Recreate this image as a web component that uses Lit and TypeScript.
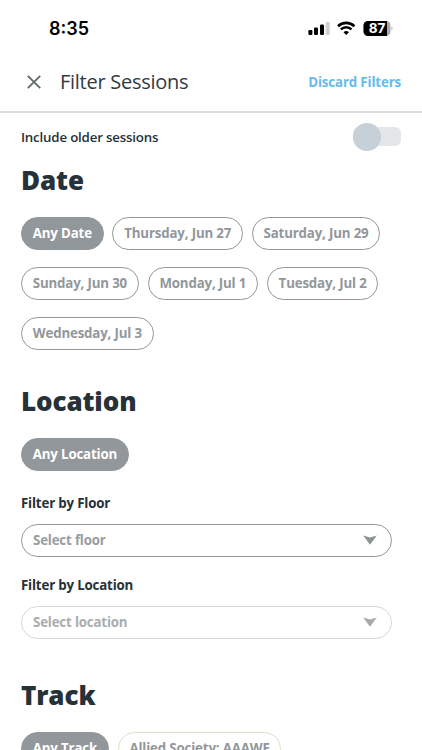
import { LitElement, html, css } from "lit";
import { customElement, property } from "lit/decorators.js";

@customElement("filter-chip")
class FilterChip extends LitElement {
  @property() variant = "outline";
  static styles = css`
    :host { display: block; }
    .chip {
      box-sizing: border-box; height: 33px; padding: 0 10.8px;
      border: 1px solid #929799; border-radius: 17px;
      font: 700 13.3px/30px "Open Sans", "Noto Sans", sans-serif; letter-spacing: -0.17px;
      color: #92979b; white-space: nowrap;
    }
    .solid { background: #91979b; border-color: #91979b; color: #fff; }
    .olive { border-color: #dde0c8; }
  `;
  render() {
    return html`<div class="chip ${this.variant}"><slot></slot></div>`;
  }
}

@customElement("filter-select")
class FilterSelect extends LitElement {
  @property() label = "";
  @property() placeholder = "";
  @property() state = "enabled";
  static styles = css`
    :host { display: block; font: 700 13.3px/20px "Open Sans", "Noto Sans", sans-serif; letter-spacing: -0.18px; }
    .label { color: #263138; height: 20px; }
    .box {
      box-sizing: border-box; width: 371.4px; height: 33px; margin-top: 11px;
      padding: 0 14px 1px 11px; display: flex; align-items: center; justify-content: space-between;
      border: 1px solid #929799; border-radius: 17px; color: #989da0;
    }
    .arrow { display: block; fill: #8d9295; }
    .disabled { border-color: #d4d6d7; color: #a9adaf; }
    .disabled .arrow { fill: #a5a9ab; }
  `;
  render() {
    return html`<div class="label">${this.label}</div>
      <div class="box ${this.state}">
        <span>${this.placeholder}</span>
        <svg class="arrow" width="14" height="10" viewBox="0 0 14 10"><path d="M.2.6 7 2.4 13.8.6 7 9.7Z" /></svg>
      </div>`;
  }
}

@customElement("app-root")
class AppRoot extends LitElement {
  static styles = css`
    :host {
      display: block; width: 422px; height: 750px; overflow: hidden; background: #fff;
      color: #263138; font-family: "Open Sans", "Noto Sans", sans-serif;
    }
    .status { height: 54px; display: flex; align-items: center; padding: 2px 29px 0 49px; box-sizing: border-box; }
    .time { font: 600 18px/22px Inter, sans-serif; color: #000; flex: 1; padding-top: 1px; }
    .icons { display: block; }
    .level { font: 700 13.5px Inter, sans-serif; fill: #fff; }
    .bar {
      height: 59px; box-sizing: border-box; border-bottom: 2px solid #dcddde;
      display: flex; align-items: center; padding: 0 21px 2px 27px;
    }
    .title { flex: 1; margin-left: 19px; font-size: 20px; line-height: 28px; color: #303a40; letter-spacing: -0.27px; padding-top: 1px; }
    .discard { font-size: 13.3px; line-height: 20px; font-weight: 700; color: #68baee; letter-spacing: -0.15px; }
    .older { height: 48px; box-sizing: border-box; display: flex; align-items: center; justify-content: space-between; padding: 0 20.6px 1px 21px; font-size: 13.3px; font-weight: 600; letter-spacing: -0.19px; }
    .toggle { width: 48px; height: 28px; display: flex; align-items: center; }
    .track { width: 100%; height: 19px; border-radius: 6px; background: #e3e7ea; display: flex; align-items: center; }
    .knob { width: 28px; height: 28px; flex: none; border-radius: 50%; background: #c7d0d6; }
    .section { padding-left: 21px; }
    .heading { margin: 0; padding-top: 1px; font-size: 26px; line-height: 36px; font-weight: 800; letter-spacing: -0.1px; }
    .chips { display: flex; flex-wrap: wrap; column-gap: 8.8px; row-gap: 16.8px; margin-top: 19px; }
    .date { height: 221px; }
    .location { height: 294px; }
    .floor { margin-top: 22px; }
    .room { margin-top: 18px; }
  `;
  render() {
    return html`
      <div class="status">
        <span class="time">8:35</span>
        <svg class="icons" width="86" height="18" viewBox="0 0 86 18">
          <rect x="1.4" y="11" width="4" height="5" rx="1.2" />
          <rect x="7" y="8.5" width="4" height="7.5" rx="1.2" />
          <rect x="13" y="5.5" width="4" height="10.5" rx="1.2" />
          <rect x="18.7" y="3" width="4" height="13" rx="1.2" fill="#d0d0d0" />
          <g fill="none" stroke="#000" stroke-width="2.6">
            <path d="M31 7.2a11.8 11.8 0 0 1 16.4 0" />
            <path d="M33.9 10.4a7.6 7.6 0 0 1 10.6 0" />
          </g>
          <path d="M39.2 16 36.5 13.2a4 4 0 0 1 5.4 0Z" />
          <rect x="56.5" y="2" width="27" height="15" rx="4.5" fill="#aaa" />
          <path d="M61 2H80v15H61A4.5 4.5 0 0 1 56.5 12.5V6.5A4.5 4.5 0 0 1 61 2Z" />
          <path d="M84.5 7.5q2 2 0 4Z" fill="#aaa" />
          <text class="level" x="70" y="14.3" text-anchor="middle">87</text>
        </svg>
      </div>
      <div class="bar">
        <svg width="14" height="14" viewBox="0 0 14 14"><path d="M.8.8 13.2 13.2M13.2.8.8 13.2" stroke="#626b6e" stroke-width="1.9" fill="none" /></svg>
        <span class="title">Filter Sessions</span>
        <span class="discard">Discard Filters</span>
      </div>
      <div class="older">
        <span>Include older sessions</span>
        <div class="toggle"><div class="track"><div class="knob"></div></div></div>
      </div>
      <div class="section date">
        <h2 class="heading">Date</h2>
        <div class="chips">
          <filter-chip variant="solid">Any Date</filter-chip>
          ${["Thursday, Jun 27", "Saturday, Jun 29", "Sunday, Jun 30", "Monday, Jul 1", "Tuesday, Jul 2", "Wednesday, Jul 3"].map(
            (d) => html`<filter-chip>${d}</filter-chip>`
          )}
        </div>
      </div>
      <div class="section location">
        <h2 class="heading">Location</h2>
        <div class="chips"><filter-chip variant="solid">Any Location</filter-chip></div>
        <filter-select class="floor" label="Filter by Floor" placeholder="Select floor"></filter-select>
        <filter-select class="room" label="Filter by Location" placeholder="Select location" state="disabled"></filter-select>
      </div>
      <div class="section">
        <h2 class="heading">Track</h2>
        <div class="chips">
          <filter-chip variant="solid">Any Track</filter-chip>
          <filter-chip variant="olive">Allied Society: AAAWE</filter-chip>
        </div>
      </div>
    `;
  }
}
